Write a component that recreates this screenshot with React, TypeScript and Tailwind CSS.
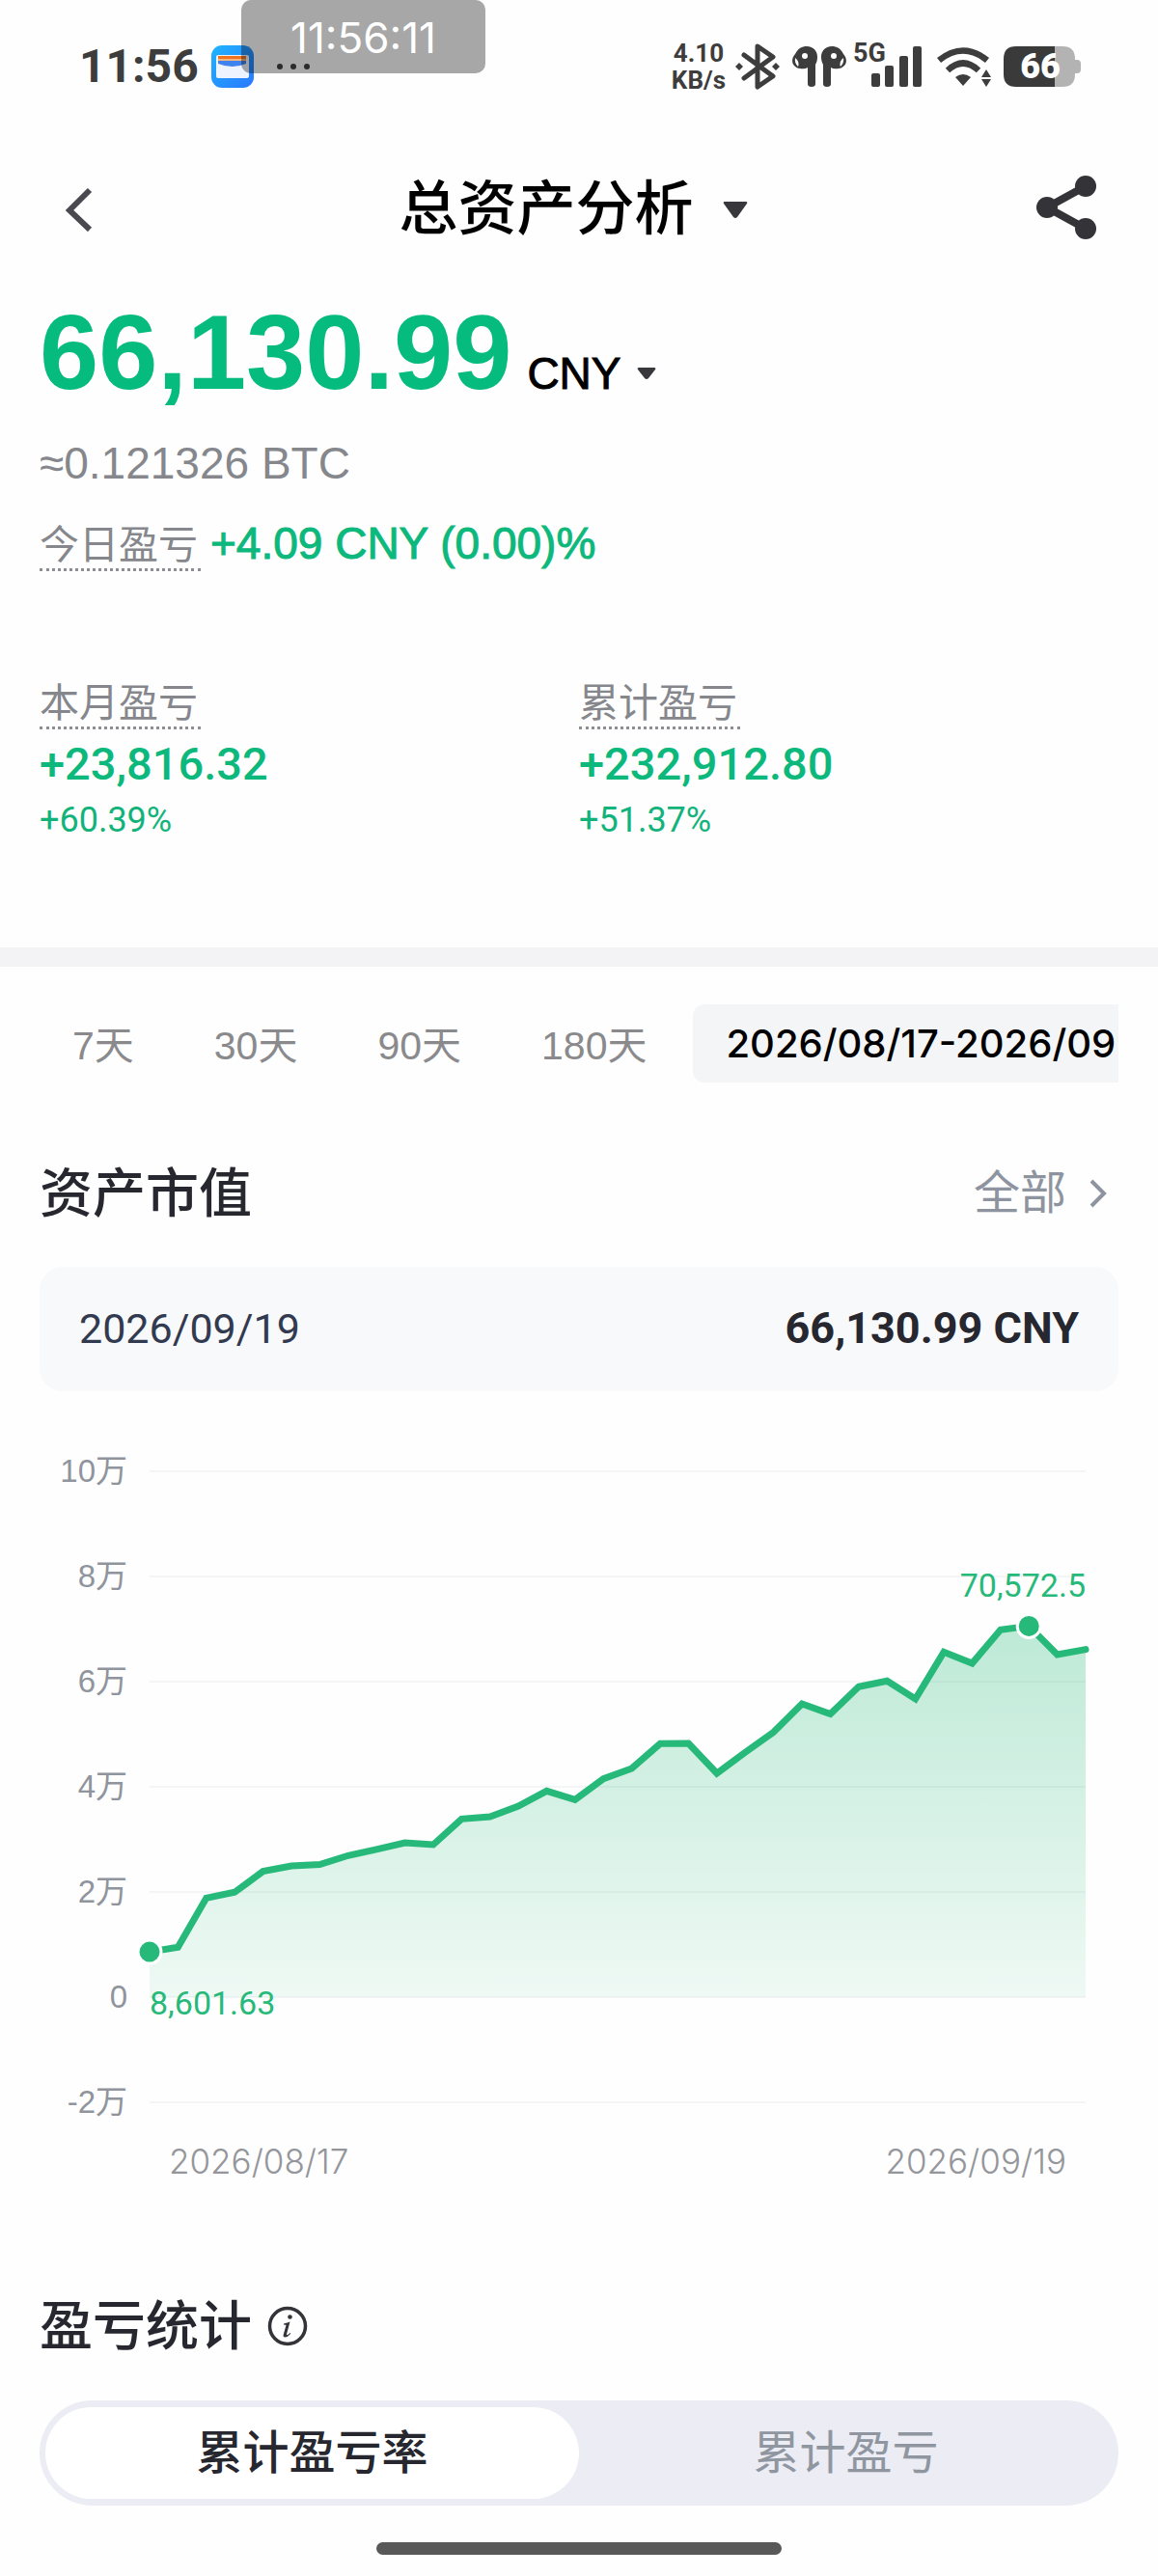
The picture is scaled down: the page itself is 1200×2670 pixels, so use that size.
import { useState } from "react";

type Period = {
  id: string;
  label: string;
};

const periods: Period[] = [
  { id: "7d", label: "7天" },
  { id: "30d", label: "30天" },
  { id: "90d", label: "90天" },
  { id: "180d", label: "180天" },
];

const assetValues = [
  8601.63, 9490, 18850, 19950, 23930, 24960, 25210, 26920, 28110, 29360, 28990,
  33890, 34310, 36330, 39210, 37560, 41540, 43490, 48200, 48260, 42570, 46550,
  50400, 55780, 53840, 59030, 60130, 56700, 65630, 63490, 69850, 70572.5, 65140,
  66130.99,
];

const axisLabels = ["10万", "8万", "6万", "4万", "2万", "0", "-2万"];

const CHART_LEFT = 114;
const CHART_RIGHT = 1084;
const CHART_TOP = 35;
const ROW_HEIGHT = 109;
const ZERO_Y = CHART_TOP + ROW_HEIGHT * 5;

function getX(index: number) {
  return (
    CHART_LEFT +
    ((CHART_RIGHT - CHART_LEFT) / (assetValues.length - 1)) * index
  );
}

function getY(value: number) {
  return ZERO_Y - (value / 20000) * ROW_HEIGHT;
}

function StatusBar() {
  return (
    <div className="relative flex h-[138px] items-center justify-between pl-[82px] pr-20 font-[Roboto,sans-serif] text-[#3d3d3d]">
      <div className="flex items-center gap-[13px]">
        <span className="text-[48px] font-bold leading-[56px]">11:56</span>
        <svg className="h-11 w-11" viewBox="0 0 44 44" aria-hidden="true">
          <defs>
            <linearGradient id="wallet" x1="0" y1="0" x2="1" y2="1">
              <stop offset="0" stopColor="#1fb4ff" />
              <stop offset="1" stopColor="#2a78ff" />
            </linearGradient>
          </defs>
          <rect width="44" height="44" rx="11" fill="url(#wallet)" />
          <rect x="5" y="10" width="34" height="24" rx="2" fill="#eef4ff" />
          <rect x="7" y="11" width="29" height="3" fill="#f0741f" />
          <rect x="7" y="14" width="29" height="2" fill="#f6b57a" />
          <path d="M7 16h29v3q-14 6-29 0z" fill="#3f83ee" />
        </svg>
      </div>

      <div className="flex items-center">
        <div className="text-center text-[26px] font-bold leading-[28px]">
          <div>4.10</div>
          <div>KB/s</div>
        </div>

        <svg className="ml-[10px] h-12 w-[46px]" viewBox="0 0 46 48" aria-hidden="true">
          <path
            d="M9 12 39 34 23 45V3L39 14 9 36"
            fill="none"
            stroke="currentColor"
            strokeWidth="5"
            strokeLinecap="round"
            strokeLinejoin="round"
          />
          <path d="m4 20 4 4-4 4-4-4zM42 20l4 4-4 4-4-4z" fill="currentColor" />
        </svg>

        <svg className="ml-3 h-[42px] w-[58px]" viewBox="0 0 58 42" aria-hidden="true">
          <g id="bud">
            <path
              d="M4 8C7 2 11 0 16 0c7 0 11 5 11 11 0 4-1 6-2 8v20q0 3-4 3t-4-3V22q-3 2-8 1C2 22-2 15 4 8z"
              fill="currentColor"
            />
            <circle cx="14" cy="10" r="3" fill="#fff" />
            <path d="M4 12q-1 5 3 9 2-5-3-9z" fill="#fff" />
          </g>
          <use href="#bud" transform="translate(58 0) scale(-1 1)" />
        </svg>

        <div className="relative ml-6 h-[42px] w-[54px]">
          <span className="absolute -left-[18px] -top-2 text-[27px] font-bold leading-[30px]">
            5G
          </span>
          <svg className="h-full w-full" viewBox="0 0 54 42" aria-hidden="true">
            <g fill="currentColor">
              <rect x="1" y="28" width="9" height="14" rx="2" />
              <rect x="15" y="20" width="9" height="22" rx="2" />
              <rect x="30" y="10" width="9" height="32" rx="2" />
              <rect x="44" y="0" width="9" height="42" rx="2" />
            </g>
          </svg>
        </div>

        <svg className="ml-[15px] h-[42px] w-14" viewBox="0 0 56 42" aria-hidden="true">
          <g fill="none" stroke="currentColor" strokeWidth="6.500">
            <path d="M2 14.500Q27 -5.500 52 14.500" />
            <path d="M11 25Q27 10 43 25" />
          </g>
          <path d="M19 32q8-6 16 0l-8 9z" fill="currentColor" />
          <path d="m51 24 5 8H46zM46 34h10l-5 8z" fill="currentColor" />
        </svg>

        <div className="relative ml-[13px] h-[42px] w-20">
          <svg className="h-full w-full" viewBox="0 0 80 42" aria-hidden="true">
            <path d="M53 0h8q13 0 13 13v1h2q4 0 4 4v6q0 4-4 4h-2v1q0 13-13 13h-8z" fill="#b3b3b3" />
            <path d="M13 0h40v42H13Q0 42 0 29V13Q0 0 13 0z" fill="#3a3a3a" />
          </svg>
          <span className="absolute inset-0 pr-1 text-center text-[36px] font-black leading-[43px] text-white">
            66
          </span>
        </div>
      </div>

      <div className="absolute left-[250px] top-0 flex h-[76px] w-[253px] justify-center rounded-[10px] bg-black/[0.34] font-[Inter,sans-serif] text-[44px] leading-[79px] text-white">
        11:56:11
      </div>
      <svg className="absolute left-[286px] top-[65px] h-2 w-9" viewBox="0 0 36 8" aria-hidden="true">
        <g fill="#2b2b2b">
          <circle cx="4" cy="4" r="3" />
          <circle cx="18" cy="4" r="3" />
          <circle cx="32" cy="4" r="3" />
        </g>
      </svg>
    </div>
  );
}

function Stat({
  label,
  value,
  percent,
}: {
  label: string;
  value: string;
  percent: string;
}) {
  return (
    <div>
      <div className="inline-block border-b-[3px] border-dotted border-[#8d8e92] pr-[3px] pt-1 text-[41px] leading-[48px] text-[#85878c]">
        {label}
      </div>
      <p className="mt-2 font-[Roboto,sans-serif] text-[47px] font-medium leading-[56px] text-[#0db87c]">
        {value}
      </p>
      <p className="mt-2 font-[Roboto,sans-serif] text-[36px] leading-[44px] text-[#12b37b]">
        {percent}
      </p>
    </div>
  );
}

function AssetChart() {
  const line = assetValues
    .map((value, index) => `${getX(index)},${getY(value)}`)
    .join(" ");
  const area = `${CHART_LEFT},${ZERO_Y} ${line} ${CHART_RIGHT},${ZERO_Y}`;
  const maxIndex = assetValues.indexOf(Math.max(...assetValues));

  return (
    <svg
      className="mt-12 block w-full overflow-visible"
      viewBox="0 0 1118 710"
      role="img"
      aria-label="资产市值"
    >
      <defs>
        <linearGradient id="area" x1="0" y1="0" x2="0" y2="1">
          <stop offset="0" stopColor="#27b97a" stopOpacity="0.3" />
          <stop offset="1" stopColor="#27b97a" stopOpacity="0.07" />
        </linearGradient>
      </defs>

      {axisLabels.map((label, index) => {
        const y = CHART_TOP + ROW_HEIGHT * index;

        return (
          <g key={label}>
            <line x1={CHART_LEFT} x2={CHART_RIGHT} y1={y} y2={y} stroke="#f3f5f6" strokeWidth="2" />
            <text
              x="91"
              y={y + 11}
              textAnchor="end"
              fill="#8f949d"
              className="font-['Liberation_Sans','Noto_Sans_CJK_SC',sans-serif] text-[33px]"
            >
              {label}
            </text>
          </g>
        );
      })}

      <polygon points={area} fill="url(#area)" />
      <polyline
        points={line}
        fill="none"
        stroke="#27b97a"
        strokeWidth="7"
        strokeLinecap="round"
      />

      <g fill="#27b97a" stroke="#fff" strokeWidth="3">
        <circle cx={getX(0)} cy={getY(assetValues[0])} r="12" />
        <circle cx={getX(maxIndex)} cy={getY(assetValues[maxIndex])} r="12" />
      </g>

      <g fill="#27b97a" className="font-[Roboto,sans-serif] text-[34px]">
        <text x={CHART_LEFT} y="598">
          8,601.63
        </text>
        <text x={CHART_RIGHT} y="165" textAnchor="end">
          70,572.5
        </text>
      </g>
    </svg>
  );
}

export default function App() {
  const [period, setPeriod] = useState("custom");
  const [mode, setMode] = useState("rate");

  return (
    <main className="min-h-screen bg-[#fefefe] font-['Liberation_Sans','Noto_Sans_CJK_SC',sans-serif] text-[#272730]">
      <StatusBar />

      <header className="grid h-[154px] grid-cols-[1fr_auto_1fr] items-center pl-[52px] pr-16 pt-1">
        <button aria-label="返回" className="justify-self-start px-4">
          <svg className="h-[46px] w-7" viewBox="0 0 28 46" aria-hidden="true">
            <path d="M25 3 4 24l21 20" fill="none" stroke="#4a4950" strokeWidth="6" />
          </svg>
        </button>
        <button className="flex items-center gap-[30px] text-black">
          <h1 className="text-[61px] font-medium leading-[72px]">总资产分析</h1>
          <svg className="h-[18px] w-[26px]" viewBox="0 0 26 18" aria-hidden="true">
            <path d="M2 1h22q2 0 1 2L15 17q-2 2-4 0L1 3Q0 1 2 1z" fill="#37373c" />
          </svg>
        </button>
        <button aria-label="分享" className="justify-self-end pb-1">
          <svg className="h-[66px] w-[62px]" viewBox="0 0 62 66" aria-hidden="true">
            <path d="M51 11 11 33l40 22" fill="none" stroke="#333338" strokeWidth="8" />
            <g fill="#333338">
              <circle cx="51" cy="11" r="11" />
              <circle cx="11" cy="33" r="11" />
              <circle cx="51" cy="55" r="11" />
            </g>
          </svg>
        </button>
      </header>

      <section className="px-[41px] pt-[18px]">
        <div className="flex items-baseline">
          <span className="text-[110px] font-bold leading-[110px] text-[#05bb7d]">
            66,130.99
          </span>
          <button className="ml-4 flex items-center gap-4 text-[46px] leading-[56px] text-black [-webkit-text-stroke:1px]">
            CNY
            <svg className="h-[14px] w-5" viewBox="0 0 20 14" aria-hidden="true">
              <path d="M2 1h16q2 0 1 2l-7 9q-2 2-4 0L1 3Q0 1 2 1z" fill="#37373c" />
            </svg>
          </button>
        </div>
        <p className="mt-8 text-[46px] leading-[56px] text-[#85878c]">
          ≈0.121326 BTC
        </p>
        <div className="mt-[29px] flex items-start gap-[10px]">
          <span className="border-b-[3px] border-dotted border-[#8d8e92] pr-[3px] pt-1 text-[41px] leading-[48px] text-[#85878c]">
            今日盈亏
          </span>
          <span className="text-[46px] leading-[52px] text-[#0db87c] [-webkit-text-stroke:1px]">
            +4.09 CNY (0.00)%
          </span>
        </div>

        <div className="mt-[109px] grid grid-cols-2">
          <Stat label="本月盈亏" value="+23,816.32" percent="+60.39%" />
          <Stat label="累计盈亏" value="+232,912.80" percent="+51.37%" />
        </div>
      </section>

      <div className="mt-[110px] h-5 bg-[#f3f3f5]" />

      <section className="px-[41px] pt-[39px]">
        <div className="flex items-center whitespace-nowrap pl-[34px]">
          <div className="flex shrink-0 gap-[83px] pt-1 text-[41px] leading-[52px]">
            {periods.map((item) => (
              <button
                key={item.id}
                onClick={() => setPeriod(item.id)}
                className={period === item.id ? "text-black" : "text-[#8a8a8d]"}
              >
                {item.label}
              </button>
            ))}
          </div>
          <button
            onClick={() => setPeriod("custom")}
            className={`ml-12 h-[81px] flex-1 rounded-l-xl pl-[34px] text-left font-[Inter,sans-serif] text-[40px] font-medium ${
              period === "custom" ? "bg-[#f4f5f7] text-black" : "text-[#8a8a8d]"
            }`}
          >
            2026/08/17-2026/09
          </button>
        </div>

        <div className="mt-[79px] flex items-center justify-between pr-3">
          <h2 className="text-[55px] font-medium leading-[72px]">资产市值</h2>
          <a href="#all" className="flex items-center gap-6 text-[48px] leading-[72px] text-[#8e949f]">
            全部
            <svg className="h-[30px] w-[18px]" viewBox="0 0 18 30" aria-hidden="true">
              <path d="m2 2 13 13L2 28" fill="none" stroke="currentColor" strokeWidth="4" />
            </svg>
          </a>
        </div>

        <div className="mt-10 flex items-center justify-between rounded-3xl bg-[#f8f9fb] px-[41px] pb-[37px] pt-9 font-[Roboto,sans-serif] leading-[56px]">
          <span className="text-[43px] text-[#323a4f]">2026/09/19</span>
          <span className="text-[45px] font-bold text-[#272730]">66,130.99 CNY</span>
        </div>

        <AssetChart />

        <div className="mt-5 flex justify-between pl-[134px] pr-[54px] font-[Inter,sans-serif] text-[35px] font-light leading-[40px] text-[#94969b]">
          <span>2026/08/17</span>
          <span>2026/09/19</span>
        </div>

        <div className="mt-[115px] flex items-center gap-4">
          <h2 className="text-[55px] font-medium leading-[72px]">盈亏统计</h2>
          <button aria-label="说明">
            <svg className="h-[42px] w-[42px]" viewBox="0 0 42 42" aria-hidden="true">
              <circle cx="21" cy="21" r="18.500" fill="none" stroke="#333338" strokeWidth="3.500" />
              <circle cx="23.500" cy="11.500" r="2.300" fill="#333338" />
              <path
                d="M17 18.500q4-1 6.500-2l-3.500 13q0 2 3.500-1.500l.8.8q-3 3.700-6 3.700-2.300 0-1.500-3l2.700-9.500q-1-.700-2.500-.300z"
                fill="#333338"
              />
            </svg>
          </button>
        </div>

        <div className="mt-[41px] flex rounded-full bg-[#ebecf4] px-[6px] py-[7px] text-[48px] leading-[95px]">
          <button
            onClick={() => setMode("rate")}
            className={`flex-1 rounded-full ${
              mode === "rate" ? "bg-white font-medium text-[#272730]" : "text-[#8f96a0]"
            }`}
          >
            累计盈亏率
          </button>
          <button
            onClick={() => setMode("total")}
            className={`flex-1 rounded-full ${
              mode === "total" ? "bg-white font-medium text-[#272730]" : "text-[#8f96a0]"
            }`}
          >
            累计盈亏
          </button>
        </div>
      </section>

      <div className="mx-auto mt-[38px] h-[13px] w-[35%] rounded-full bg-[#585858]" />
    </main>
  );
}
